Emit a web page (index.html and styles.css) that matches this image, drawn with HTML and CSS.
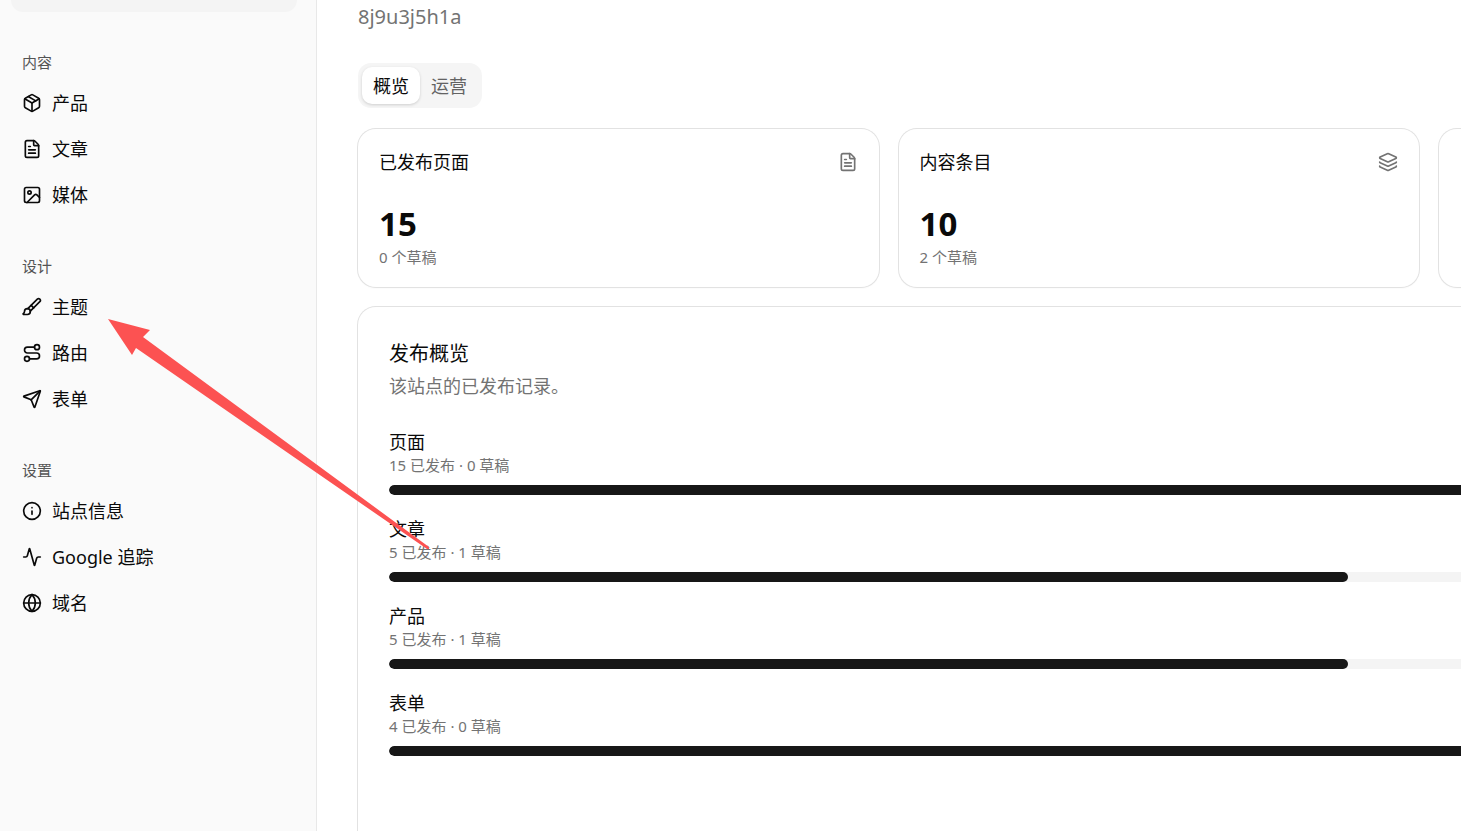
FILE: index.html
```html
<!DOCTYPE html>
<html lang="zh-CN">
<head>
  <meta charset="UTF-8" />
  <meta name="viewport" content="width=device-width, initial-scale=1.0">
  <title>概览</title>
  <link rel="stylesheet" href="styles.css">
</head>
<body>

  <aside class="sidebar">
    <div class="site-switcher"></div>

    <nav class="nav">
      <section class="nav-group">
        <h2 class="nav-label">内容</h2>
        <a class="nav-item" href="#products">
          <svg class="icon" viewBox="0 0 24 24"><path d="M11 21.73a2 2 0 0 0 2 0l7-4A2 2 0 0 0 21 16V8a2 2 0 0 0-1-1.73l-7-4a2 2 0 0 0-2 0l-7 4A2 2 0 0 0 3 8v8a2 2 0 0 0 1 1.73z"/><path d="M12 22V12"/><path d="M3.3 7 12 12l8.7-5"/><path d="m7.5 4.27 9 5.15"/></svg>
          <span>产品</span>
        </a>
        <a class="nav-item" href="#articles">
          <svg class="icon" viewBox="0 0 24 24"><path d="M6 22a2 2 0 0 1-2-2V4a2 2 0 0 1 2-2h8a2.4 2.4 0 0 1 1.7.7l3.6 3.6A2.4 2.4 0 0 1 20 8v12a2 2 0 0 1-2 2z"/><path d="M14 2v5a1 1 0 0 0 1 1h5"/><path d="M10 9H8"/><path d="M16 13H8"/><path d="M16 17H8"/></svg>
          <span>文章</span>
        </a>
        <a class="nav-item" href="#media">
          <svg class="icon" viewBox="0 0 24 24"><rect x="3" y="3" width="18" height="18" rx="2"/><circle cx="9" cy="9" r="2"/><path d="m21 15-3.1-3.1a2 2 0 0 0-2.8 0L6 21"/></svg>
          <span>媒体</span>
        </a>
      </section>

      <section class="nav-group">
        <h2 class="nav-label">设计</h2>
        <a class="nav-item" href="#theme">
          <svg class="icon" viewBox="0 0 24 24"><path d="m11 10 3 3"/><path d="M6.5 21A3.5 3.5 0 1 0 3 17.5a2.6 2.6 0 0 1-1.7 2.5 1 1 0 0 0 .5 1z"/><path d="M9.97 17.03 21.38 5.63a1 1 0 0 0-3-3L6.97 14.03"/></svg>
          <span>主题</span>
        </a>
        <a class="nav-item" href="#routes">
          <svg class="icon" viewBox="0 0 24 24"><circle cx="6" cy="19" r="3"/><path d="M9 19h8.5a3.5 3.5 0 0 0 0-7h-11a3.5 3.5 0 0 1 0-7H15"/><circle cx="18" cy="5" r="3"/></svg>
          <span>路由</span>
        </a>
        <a class="nav-item" href="#forms">
          <svg class="icon" viewBox="0 0 24 24"><path d="M14.54 21.69a.5.5 0 0 0 .94-.03l6.5-19a.5.5 0 0 0-.64-.64l-19 6.5a.5.5 0 0 0-.02.94l7.93 3.18a2 2 0 0 1 1.11 1.11z"/><path d="m21.85 2.15-10.94 10.94"/></svg>
          <span>表单</span>
        </a>
      </section>

      <section class="nav-group">
        <h2 class="nav-label">设置</h2>
        <a class="nav-item" href="#info">
          <svg class="icon" viewBox="0 0 24 24"><circle cx="12" cy="12" r="10"/><path d="M12 16v-4"/><path d="M12 8h.01"/></svg>
          <span>站点信息</span>
        </a>
        <a class="nav-item" href="#tracking">
          <svg class="icon" viewBox="0 0 24 24"><path d="M22 12h-2.48a2 2 0 0 0-1.93 1.46l-2.35 8.36a.25.25 0 0 1-.48 0L9.24 2.18a.25.25 0 0 0-.48 0l-2.35 8.36A2 2 0 0 1 4.49 12H2"/></svg>
          <span>Google 追踪</span>
        </a>
        <a class="nav-item" href="#domain">
          <svg class="icon" viewBox="0 0 24 24"><circle cx="12" cy="12" r="10"/><path d="M12 2a14.5 14.5 0 0 0 0 20 14.5 14.5 0 0 0 0-20"/><path d="M2 12h20"/></svg>
          <span>域名</span>
        </a>
      </section>
    </nav>
  </aside>

  <main class="main">
    <p class="site-id">8j9u3j5h1a</p>

    <div class="tabs" role="tablist">
      <button class="tab active" role="tab" aria-selected="true">概览</button>
      <button class="tab" role="tab" aria-selected="false">运营</button>
    </div>

    <div class="stats">
      <article class="card stat">
        <header class="stat-header">
          <h3 class="stat-title">已发布页面</h3>
          <svg class="icon muted" viewBox="0 0 24 24"><path d="M6 22a2 2 0 0 1-2-2V4a2 2 0 0 1 2-2h8a2.4 2.4 0 0 1 1.7.7l3.6 3.6A2.4 2.4 0 0 1 20 8v12a2 2 0 0 1-2 2z"/><path d="M14 2v5a1 1 0 0 0 1 1h5"/><path d="M10 9H8"/><path d="M16 13H8"/><path d="M16 17H8"/></svg>
        </header>
        <p class="stat-value">15</p>
        <p class="stat-note">0 个草稿</p>
      </article>
      <article class="card stat">
        <header class="stat-header">
          <h3 class="stat-title">内容条目</h3>
          <svg class="icon muted" viewBox="0 0 24 24"><path d="M12.83 2.18a2 2 0 0 0-1.66 0L2.6 6.08a1 1 0 0 0 0 1.83l8.58 3.91a2 2 0 0 0 1.66 0l8.58-3.9a1 1 0 0 0 0-1.83z"/><path d="M2 12a1 1 0 0 0 .58.91l8.6 3.91a2 2 0 0 0 1.65 0l8.58-3.9A1 1 0 0 0 22 12"/><path d="M2 17a1 1 0 0 0 .58.91l8.6 3.91a2 2 0 0 0 1.65 0l8.58-3.9A1 1 0 0 0 22 17"/></svg>
        </header>
        <p class="stat-value">10</p>
        <p class="stat-note">2 个草稿</p>
      </article>
      <article class="card stat"></article>
    </div>

    <div class="panels">
      <section class="card panel">
        <h3 class="panel-title">发布概览</h3>
        <p class="panel-desc">该站点的已发布记录。</p>

        <div class="records">
          <div class="record">
            <p class="record-name">页面</p>
            <p class="record-note">15 已发布 · 0 草稿</p>
            <div class="bar"><div class="bar-fill" style="width: 100%"></div></div>
          </div>
          <div class="record">
            <p class="record-name">文章</p>
            <p class="record-note">5 已发布 · 1 草稿</p>
            <div class="bar"><div class="bar-fill" style="width: 83.33%"></div></div>
          </div>
          <div class="record">
            <p class="record-name">产品</p>
            <p class="record-note">5 已发布 · 1 草稿</p>
            <div class="bar"><div class="bar-fill" style="width: 83.33%"></div></div>
          </div>
          <div class="record">
            <p class="record-name">表单</p>
            <p class="record-note">4 已发布 · 0 草稿</p>
            <div class="bar"><div class="bar-fill" style="width: 100%"></div></div>
          </div>
        </div>
      </section>
    </div>
  </main>

  <!-- pointer to the theme entry -->
  <svg class="arrow" viewBox="0 0 322 230" aria-hidden="true">
    <path d="M0 0 42 11 35 18 321 228 321 230 319 230 28 29 24 36z"/>
  </svg>

</body>
</html>
```

FILE: styles.css
```css
* {
  margin: 0;
  padding: 0;
  box-sizing: border-box;
}

body {
  font-family: "Noto Sans", "Noto Sans CJK SC", sans-serif;
  font-size: 18px;
  line-height: 26px;
  color: #0a0a0a;
  background-color: #fff;
  display: flex;
  height: 100vh;
  overflow: hidden;
  position: relative;
}

h2, h3 {
  font-weight: 400;
}

.icon {
  width: 20px;
  height: 20px;
  flex-shrink: 0;
  fill: none;
  stroke: currentColor;
  stroke-width: 2;
  stroke-linecap: round;
  stroke-linejoin: round;
}

.muted {
  color: #737373;
}

/* sidebar */
.sidebar {
  width: 317px;
  flex-shrink: 0;
  background-color: #fafafa;
  border-right: 1px solid #e8e8e8;
}

.site-switcher {
  height: 12px;
  margin: 0 19px 0 11px;
  background-color: #f4f4f4;
  border-radius: 0 0 12px 12px;
}

.nav {
  display: flex;
  flex-direction: column;
  gap: 30px;
  padding: 29px 11px;
}

.nav-group {
  display: flex;
  flex-direction: column;
  gap: 5px;
}

.nav-label {
  font-size: 15px;
  line-height: 30px;
  padding: 6px 11px 0;
  color: #545454;
}

.nav-item {
  display: flex;
  align-items: center;
  gap: 10px;
  height: 41px;
  padding: 0 11px;
  border-radius: 10px;
  color: #0a0a0a;
  text-decoration: none;
}

.nav-item:hover {
  background-color: #f4f4f4;
}

/* main */
.main {
  flex: 1;
  min-width: 0;
  padding: 4px 0 4px 41px;
  overflow: hidden;
}

.site-id {
  font-size: 20px;
  color: #737373;
}

.tabs {
  display: inline-flex;
  margin: 33px 0 21px;
  padding: 4px;
  background-color: #f5f5f5;
  border-radius: 13px;
  vertical-align: top;
}

.tab {
  height: 37px;
  padding: 0 11px;
  border: none;
  border-radius: 10px;
  background: none;
  font: inherit;
  color: #636363;
  cursor: pointer;
}

.tab.active {
  background-color: #fff;
  color: #0a0a0a;
  box-shadow: 0 1px 3px rgba(0, 0, 0, 0.16);
}

.card {
  background-color: #fff;
  border-radius: 18px;
  box-shadow: 0 0 0 1px #e2e2e2, 0 1px 2px rgba(0, 0, 0, 0.06);
}

/* the board keeps its four columns and is cut off on narrow windows */
.stats {
  display: grid;
  grid-template-columns: repeat(4, 1fr);
  gap: 20px;
  min-width: 2142px;
}

.stat {
  padding: 20px 21px;
}

.stat-header {
  display: flex;
  align-items: center;
  justify-content: space-between;
  margin-bottom: 29px;
}

.stat-title {
  font-size: 18px;
}

.stat-value {
  font-size: 33px;
  font-weight: 700;
  line-height: 40px;
  margin-bottom: 3px;
}

.stat-note,
.record-note {
  font-size: 15px;
  line-height: 20px;
  color: #737373;
}

.panels {
  display: grid;
  grid-template-columns: 4fr 3fr;
  gap: 20px;
  min-width: 2142px;
  margin-top: 20px;
}

.panel {
  min-height: 560px;
  padding: 34px 31px;
}

.panel-title {
  font-size: 20px;
}

.panel-desc {
  margin-top: 6px;
  color: #737373;
}

.records {
  display: flex;
  flex-direction: column;
  gap: 21px;
  margin-top: 30px;
}

.bar {
  height: 10px;
  margin-top: 10px;
  border-radius: 5px;
  background-color: #f4f4f4;
  overflow: hidden;
}

.bar-fill {
  height: 100%;
  border-radius: 5px;
  background-color: #171717;
}

/* annotation drawn over the page */
.arrow {
  position: absolute;
  left: 108px;
  top: 319px;
  width: 322px;
  height: 230px;
  fill: #fc5252;
  pointer-events: none;
}
```
